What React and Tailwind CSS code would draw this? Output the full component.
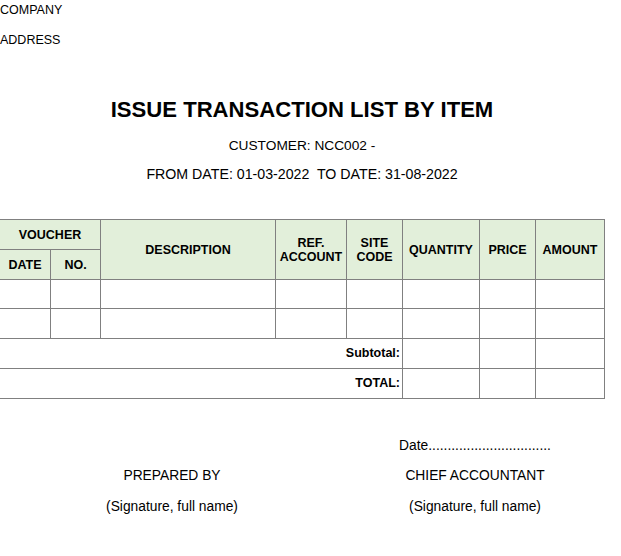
import React from "react";

const font = { fontFamily: '"Liberation Sans", Arial, sans-serif' };

function H({ className = "", children }) {
  return (
    <div className={`bg-[#e2efda] flex items-center justify-center text-center font-bold text-[12.5px] leading-[14px] text-black ${className}`}>
      {children}
    </div>
  );
}

function C({ className = "", children }) {
  return <div className={`bg-white ${className}`}>{children}</div>;
}

export default function App() {
  return (
    <div className="w-[621px] h-[556px] bg-white text-black overflow-hidden" style={font}>
      <div className="text-[12.5px] leading-[20px]">COMPANY</div>
      <div className="mt-[10px] text-[12.5px] leading-[20px]">ADDRESS</div>

      <div className="w-[606px] -ml-px">
        <div className="mt-[47px] text-center font-bold text-[22.1px] leading-[26px]">
          ISSUE TRANSACTION LIST BY ITEM
        </div>
        <div className="mt-[13px] text-center text-[13.7px] leading-[20px]">CUSTOMER: NCC002 -</div>
        <div className="mt-[8px] text-center text-[14.2px] leading-[20px] whitespace-pre">
          {"FROM DATE: 01-03-2022  TO DATE: 31-08-2022"}
        </div>
      </div>

      <div className="mt-[35px] -ml-px w-[606px] p-px bg-[#808080] grid gap-px grid-cols-[50px_49px_174px_70px_55px_76px_55px_68px] grid-rows-[29px_29px_28px_29px_29px_29px]">
        <H className="col-span-2">VOUCHER</H>
        <H className="row-span-2">DESCRIPTION</H>
        <H className="row-span-2">REF.<br />ACCOUNT</H>
        <H className="row-span-2">SITE<br />CODE</H>
        <H className="row-span-2">QUANTITY</H>
        <H className="row-span-2">PRICE</H>
        <H className="row-span-2">AMOUNT</H>
        <H>DATE</H>
        <H>NO.</H>

        {[0, 1].map((r) => (
          <React.Fragment key={r}>
            <C /><C /><C /><C /><C /><C /><C /><C />
          </React.Fragment>
        ))}

        <C className="col-span-5 flex items-center justify-end pr-[2px] font-bold text-[12.5px]">Subtotal:</C>
        <C /><C /><C />
        <C className="col-span-5 flex items-center justify-end pr-[2px] font-bold text-[12.5px]">TOTAL:</C>
        <C /><C /><C />
      </div>

      <div className="mt-[37px] flex text-[13.8px] leading-[20px]">
        <div className="w-[344px] flex flex-col items-center">
          <div className="h-[20px]"></div>
          <div className="mt-[10px]">PREPARED BY</div>
          <div className="mt-[11px]">(Signature, full name)</div>
        </div>
        <div className="w-[262px] flex flex-col items-center">
          <div>Date................................</div>
          <div className="mt-[10px]">CHIEF ACCOUNTANT</div>
          <div className="mt-[11px]">(Signature, full name)</div>
        </div>
      </div>
    </div>
  );
}
